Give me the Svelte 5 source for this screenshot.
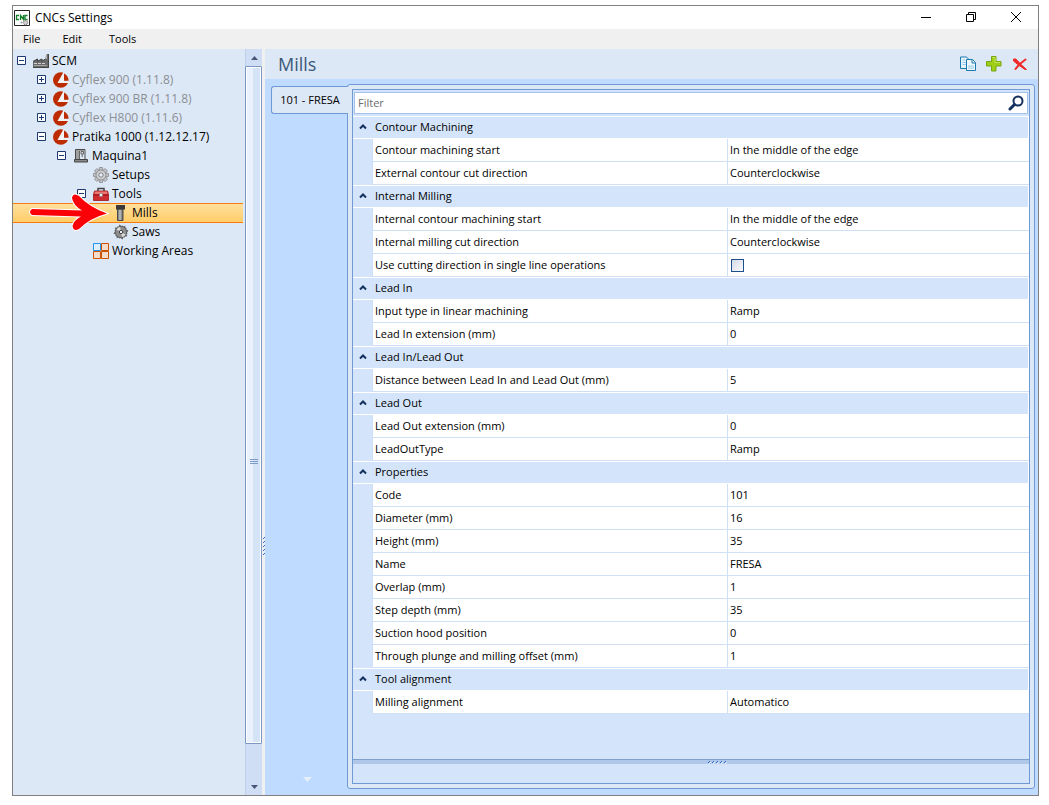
<script>
  const tree = [
    { label: 'SCM', icon: 'factory', depth: 0, open: true },
    { label: 'Cyflex 900 (1.11.8)', icon: 'brand', depth: 1, open: false, muted: true },
    { label: 'Cyflex 900 BR (1.11.8)', icon: 'brand', depth: 1, open: false, muted: true },
    { label: 'Cyflex H800 (1.11.6)', icon: 'brand', depth: 1, open: false, muted: true },
    { label: 'Pratika 1000 (1.12.12.17)', icon: 'brand', depth: 1, open: true },
    { label: 'Maquina1', icon: 'machine', depth: 2, open: true },
    { label: 'Setups', icon: 'gear', depth: 3 },
    { label: 'Tools', icon: 'toolbox', depth: 3, open: true },
    { label: 'Mills', icon: 'mill', depth: 4 },
    { label: 'Saws', icon: 'saw', depth: 4 },
    { label: 'Working Areas', icon: 'areas', depth: 3 }
  ];

  const groups = [
    { name: 'Contour Machining', props: [
      ['Contour machining start', 'In the middle of the edge'],
      ['External contour cut direction', 'Counterclockwise']
    ] },
    { name: 'Internal Milling', props: [
      ['Internal contour machining start', 'In the middle of the edge'],
      ['Internal milling cut direction', 'Counterclockwise'],
      ['Use cutting direction in single line operations', false]
    ] },
    { name: 'Lead In', props: [
      ['Input type in linear machining', 'Ramp'],
      ['Lead In extension (mm)', '0']
    ] },
    { name: 'Lead In/Lead Out', props: [
      ['Distance between Lead In and Lead Out (mm)', '5']
    ] },
    { name: 'Lead Out', props: [
      ['Lead Out extension (mm)', '0'],
      ['LeadOutType', 'Ramp']
    ] },
    { name: 'Properties', props: [
      ['Code', '101'],
      ['Diameter (mm)', '16'],
      ['Height (mm)', '35'],
      ['Name', 'FRESA'],
      ['Overlap (mm)', '1'],
      ['Step depth (mm)', '35'],
      ['Suction hood position', '0'],
      ['Through plunge and milling offset (mm)', '1']
    ] },
    { name: 'Tool alignment', props: [
      ['Milling alignment', 'Automatico']
    ] }
  ];

  let selected = $state('Mills');
  let filter = $state('');
  let closed = $state({});

  const teeth = [0, 45, 90, 135, 180, 225, 270, 315];

  function matches(name) {
    return name.toLowerCase().includes(filter.toLowerCase());
  }
</script>

{#snippet treeIcon(name)}
  <svg class="icon" width="16" height="16" viewBox="0 0 16 16" aria-hidden="true">
    {#if name === 'factory'}
      <path d="M0 8.5 4.5 6v2.200L9 6v2.200L12.500 6 13 1h2.500v14H0z" fill="#6a6a6a" />
      <path d="M0 8.500 4.500 6v2.200L9 6v2.200L12.500 6" stroke="#3c3c3c" fill="none" />
      <path d="M13.500 1v5" stroke="#b5b5b5" />
      <path d="M1 10.500h11" stroke="#d2d2d2" stroke-dasharray="3 1" />
      <path d="M1 12.500h13" stroke="#a6a6a6" />
      <path d="M0 14.500h16M15.500 1v14" stroke="#444" />
    {:else if name === 'brand'}
      <circle cx="7.800" cy="8" r="7.800" fill="#bd2c00" />
      <path d="M10.500 0 4.500 11H16V0z" fill="#f3f3f6" />
      <path d="M11 0h5v9.500h-5z" fill="#dde8f6" />
      <path d="M11 1.500C14 3 15.600 5.500 15.600 8.800H11z" fill="#bd2c00" />
    {:else if name === 'machine'}
      <path d="M2.500 12V1.500H12V11" fill="none" stroke="#4a4a4a" />
      <path d="M3 2h3v10H3z" fill="#a0a0a0" />
      <path d="M6.500 2v10" stroke="#666" />
      <path d="M6 2.500h5" stroke="#999" />
      <path d="M8 3.500h2.500v2.500H8zM9.200 6v3" fill="#ddd" stroke="#666" />
      <path d="M1.500 11.500h13v2.500H1.500z" fill="#888" stroke="#444" />
    {:else if name === 'gear'}
      <g fill="#c3c4c5" stroke="#85878a" stroke-width=".8">
        {#each teeth as t}
          <path d="M6.500.5h3l.4 3H6.100z" transform="rotate({t} 8 8)" />
        {/each}
        <circle cx="8" cy="8" r="5" />
      </g>
      <circle cx="8" cy="8" r="4.300" fill="#cfd0d1" />
      <circle cx="8" cy="8" r="2.200" fill="#e8effa" stroke="#777" stroke-width=".9" />
    {:else if name === 'toolbox'}
      <path d="M5 5V2.500h6V5" fill="none" stroke="#444" stroke-width="1.500" />
      <path d="M1.500 5h13l1 3.500V14.500H.5V8.500z" fill="#cf2d2f" stroke="#97171c" stroke-width=".8" />
      <path d="M2 5.500h12l.6 2.500H1.400z" fill="#ee7771" />
      <path d="M.5 9h15" stroke="#8e1218" />
      <path d="M6.500 7.500h3v3h-3z" fill="#eee" stroke="#777" stroke-width=".6" />
    {:else if name === 'mill'}
      <defs>
        <linearGradient id="steel"><stop stop-color="#666" /><stop offset=".45" stop-color="#c4c4c4" /><stop offset="1" stop-color="#5c5c5c" /></linearGradient>
      </defs>
      <path d="M4.500 4h5.500v11.500H4.500z" fill="url(#steel)" stroke="#4a4a4a" />
      <path d="M3 0h9v4.500H3z" fill="#3a3a3a" />
    {:else if name === 'saw'}
      <g fill="#5e5e5e">
        {#each teeth as t}
          <path d="M5 4 6.500.5l2 1.500L10 1.500 10 4z" transform="rotate({t} 8 8)" />
        {/each}
      </g>
      <circle cx="8" cy="8" r="5.300" fill="#8d8d8d" />
      <path d="M8 8 3.500 5.500A5 5 0 0 1 7 3zM8 8l4.500 2.500A5 5 0 0 1 9 13z" fill="#dcdcdc" />
      <circle cx="8" cy="8" r="1.700" fill="#eee" stroke="#444" />
    {:else}
      <path d="M8.500.5h7v7h-7zM.5 8.500h7v7h-7zM8.500 8.500h7v7h-7z" fill="#f3dccb" stroke="#cc5200" />
      <path d="M.5.5h7v7h-7z" fill="#dcedfb" stroke="#2196f3" />
    {/if}
  </svg>
{/snippet}

<div class="window">
  <header class="titlebar">
    <svg width="16" height="16" viewBox="0 0 16 16" aria-hidden="true">
      <path d="M.5.5h15v15H.5z" fill="#fff" stroke="#222" />
      <path d="M5 5.500H2.500v4H5M6.500 10V5.500L9.500 9.500V5M13.500 5.500H11v4h2.500" fill="none" stroke="#14802a" stroke-width="1.300" />
      <circle cx="11.500" cy="12.500" r="2" fill="#ddd" stroke="#888" stroke-dasharray="1 .6" stroke-width="1.500" />
      <circle cx="7.500" cy="12.500" r="1" fill="#999" />
    </svg>
    <h1>CNCs Settings</h1>
    <div class="caption-buttons">
      <button aria-label="Minimize">
        <svg width="12" height="12" viewBox="0 0 12 12"><path d="M1 6.500h10" stroke="#000" /></svg>
      </button>
      <button aria-label="Restore">
        <svg width="12" height="12" viewBox="0 0 12 12"><path d="M1.500 3.500h7v7h-7zM3.500 3.500v-2h7v7h-2" fill="none" stroke="#000" /></svg>
      </button>
      <button aria-label="Close">
        <svg width="12" height="12" viewBox="0 0 12 12"><path d="m1 1 10 10M11 1 1 11" stroke="#000" /></svg>
      </button>
    </div>
  </header>

  <nav class="menubar">
    <button>File</button>
    <button>Edit</button>
    <button>Tools</button>
  </nav>

  <div class="content">
    <ul class="tree">
      {#each tree as node}
        <li class:selected={node.label === selected} style="--depth: {node.depth}">
          {#if node.open !== undefined}
            <button class="expander" aria-label="Toggle {node.label}">
              <svg width="9" height="9" viewBox="0 0 9 9">
                <path d="M.5.5h8v8h-8z" fill="#fff" stroke="#1c3a6e" />
                <path d={node.open ? 'M2 4.500h5' : 'M2 4.500h5M4.500 2v5'} stroke="#1c3a6e" />
              </svg>
            </button>
          {:else}
            <span class="expander"></span>
          {/if}
          {@render treeIcon(node.icon)}
          <button class="node" class:muted={node.muted} onclick={() => selected = node.label}>{node.label}</button>
          {#if node.icon === 'mill'}
            <svg class="pointer" width="82" height="40" viewBox="0 0 82 40" aria-hidden="true">
              <path
                d="M5 17Q1 20 5 23L54 24.500Q47 28 45.500 34Q46.500 40 52 37Q63 26 80 21.500Q62 15 52 4Q46 0 45 6Q46 13 55 18.500Z"
                fill="#fb0007" stroke="#fff" stroke-width="2" paint-order="stroke"
              />
            </svg>
          {/if}
        </li>
      {/each}
    </ul>

    <div class="scrollbar">
      <button aria-label="Scroll up">
        <svg width="7" height="4" viewBox="0 0 7 4"><path d="M3.500 0 7 4H0z" fill="#4b5578" /></svg>
      </button>
      <div class="thumb">
        <svg width="8" height="5" viewBox="0 0 8 5"><path d="M0 .5h8M0 2.500h8M0 4.500h8" stroke="#7d9bc6" /></svg>
      </div>
      <div class="track"></div>
      <button aria-label="Scroll down">
        <svg width="7" height="4" viewBox="0 0 7 4"><path d="M0 0h7L3.500 4z" fill="#4b5578" /></svg>
      </button>
    </div>

    <div class="splitter">
      <svg width="3" height="19" viewBox="0 0 3 19">
        <path d="M1 3 3 1M1 7l2-2M1 11l2-2M1 15l2-2M1 19l2-2" stroke="#2f68cf" />
      </svg>
    </div>

    <main>
      <header class="page-header">
        <h2>Mills</h2>
        <button aria-label="Copy">
          <svg width="16" height="16" viewBox="0 0 16 16">
            <path d="M.5 1h6l2.500 2.500V12.500H.5z" fill="#e8f4fb" stroke="#1b79ae" />
            <path d="M2.500 4h3M2.500 6.500h4M2.500 8.500h4" stroke="#9ccbe6" />
            <path d="M6.500 3.500h6L15.500 6.500V14.500h-9z" fill="#eff8fd" stroke="#1b79ae" />
            <path d="M12 4v3h3" fill="none" stroke="#1b79ae" />
            <path d="M8 9h6v4H8z" fill="#c3e0f0" />
          </svg>
        </button>
        <button aria-label="Add">
          <svg width="16" height="16" viewBox="0 0 16 16">
            <path d="M5.500.5h4.500v5h5v4.500h-5v5H5.500v-5h-5V5.500h5z" fill="#9fce17" stroke="#76a610" />
            <path d="M6.500 1.500h2.500v5h5" fill="none" stroke="#c3e45a" />
          </svg>
        </button>
        <button aria-label="Delete">
          <svg width="16" height="16" viewBox="0 0 16 16">
            <path d="M1.500 3 4 3Q8 8 14.500 13.500L13 13.500Q6 9 1.500 5z" fill="#f02a2a" stroke="#f02a2a" stroke-linejoin="round" />
            <path d="M13.500 3.500Q7 8 3.500 13" fill="none" stroke="#f02a2a" stroke-width="2" stroke-linecap="round" />
          </svg>
        </button>
      </header>

      <div class="page">
        <div class="tabs">
          <button class="tab">101 - FRESA</button>
          <svg class="more" width="9" height="5" viewBox="0 0 9 5" aria-hidden="true"><path d="M0 0h9L4.500 5z" fill="#e6effb" /></svg>
        </div>

        <section class="panel">
          <div class="grid">
            <div class="search">
              <input type="text" placeholder="Filter" aria-label="Filter" bind:value={filter} />
              <svg width="16" height="16" viewBox="0 0 16 16" aria-hidden="true">
                <circle cx="10" cy="6" r="4.500" fill="none" stroke="#14305e" stroke-width="2" />
                <path d="M6.500 9.500 2 14" stroke="#14305e" stroke-width="3" stroke-linecap="round" />
              </svg>
            </div>

            <table>
              <colgroup>
                <col class="gutter-col" />
                <col />
                <col class="value-col" />
              </colgroup>
              <tbody>
                {#each groups as group}
                  <tr>
                    <th colspan="3">
                      <button onclick={() => closed[group.name] = !closed[group.name]}>
                        <svg width="8" height="6" viewBox="0 0 8 6" aria-hidden="true"><path d="M1 4.500 4 1.500l3 3" fill="none" stroke="#14305e" stroke-width="2" /></svg>
                        {group.name}
                      </button>
                    </th>
                  </tr>
                  {#if !closed[group.name]}
                    {#each group.props.filter((p) => matches(p[0])) as [name, value]}
                      <tr>
                        <td class="gutter"></td>
                        <td>{name}</td>
                        <td class="value">
                          {#if typeof value === 'boolean'}
                            <input type="checkbox" checked={value} aria-label={name} />
                          {:else}
                            {value}
                          {/if}
                        </td>
                      </tr>
                    {/each}
                  {/if}
                {/each}
              </tbody>
            </table>

            <div class="divider">
              <svg width="19" height="4" viewBox="0 0 19 4" aria-hidden="true">
                <path d="m0 3 2-2M4 3l2-2M8 3l2-2M12 3l2-2M16 3l2-2" stroke="#2f68cf" />
                <path d="m1 4 2-2M5 4l2-2M9 4l2-2M13 4l2-2M17 4l2-2" stroke="#fff" stroke-width=".7" />
              </svg>
            </div>
            <div class="description"></div>
          </div>
        </section>
      </div>
    </main>
  </div>
</div>

<style>
  :global(body) {
    background: #fff;
  }

  .window {
    box-sizing: border-box;
    display: flex;
    flex-direction: column;
    min-height: calc(100vh - 14px);
    margin: 5px 10px 9px 12px;
    border: 1px solid #808080;
    font: 12px/18px "Open Sans", "Noto Sans", sans-serif;
    color: #000;
  }

  button {
    padding: 0;
    border: 0;
    background: none;
    font: inherit;
    color: inherit;
  }

  svg {
    display: block;
    flex: none;
  }

  h1,
  h2 {
    margin: 0;
    font-weight: 400;
  }

  .titlebar {
    display: flex;
    align-items: center;
    height: 23px;
    padding-left: 1px;
    gap: 5px;
  }

  h1 {
    flex: 1;
    font-size: 12px;
  }

  .caption-buttons {
    display: flex;
    padding-bottom: 2px;
  }

  .caption-buttons button {
    display: flex;
    justify-content: center;
    width: 45px;
  }

  .menubar {
    display: flex;
    align-items: center;
    height: 20px;
    padding-left: 10px;
    gap: 22px;
    background: #f0f0f0;
    font-size: 11px;
  }

  .menubar button:last-child {
    margin-left: 5px;
  }

  .content {
    display: flex;
    flex: 1;
    background: #dde8f6;
  }

  .tree {
    flex: none;
    width: 230px;
    margin: 0 2px 0 0;
    padding: 2px 0 0;
    list-style: none;
  }

  .tree li {
    position: relative;
    box-sizing: border-box;
    display: flex;
    align-items: center;
    height: 19px;
    padding-left: calc(4px + 20px * var(--depth));
  }

  .tree li.selected {
    z-index: 1;
    background: linear-gradient(#ffe0a0, #ffcd69);
    box-shadow: inset 0 1px #f57c10, 0 1px #f57c10;
  }

  .expander {
    width: 9px;
    margin-right: 7px;
  }

  .node {
    margin-left: 3px;
    white-space: nowrap;
  }

  .node.muted {
    color: #8b8f94;
  }

  .pointer {
    position: absolute;
    left: 14px;
    top: -11px;
  }

  .scrollbar {
    box-sizing: border-box;
    display: flex;
    flex-direction: column;
    flex: none;
    width: 17px;
    border-left: 1px solid #bdcfe9;
    background: #cfdef4;
  }

  .scrollbar button {
    display: flex;
    align-items: center;
    justify-content: center;
    height: 17px;
  }

  .thumb {
    display: flex;
    flex: 20;
    align-items: center;
    justify-content: center;
    margin-left: -1px;
    border: 1px solid #7b98c4;
    border-radius: 1px;
    background: linear-gradient(90deg, #e9f1fc 45%, #d5e3f6 45%);
    box-shadow: inset 0 0 0 1px #fff;
  }

  .thumb svg {
    margin-top: 112px;
  }

  .track {
    flex: 1;
  }

  .splitter {
    display: flex;
    align-items: center;
    flex: none;
    width: 3px;
    background: #f0f0f0;
  }

  .splitter svg {
    margin-top: 246px;
  }

  main {
    display: flex;
    flex-direction: column;
    flex: 1;
    min-width: 0;
    background: #bfdbff;
  }

  .page-header {
    display: flex;
    align-items: center;
    height: 30px;
    padding: 0 10px 0 13px;
    gap: 10px;
    background: #dde8f6;
  }

  h2 {
    flex: 1;
    font-size: 18px;
    color: #3b5878;
  }

  .page {
    display: flex;
    flex: 1;
    padding: 5px 3px 6px 6px;
  }

  .tabs {
    display: flex;
    flex-direction: column;
    flex: none;
    width: 77px;
    margin-right: -1px;
    padding-top: 2px;
    z-index: 1;
  }

  .tab {
    height: 28px;
    border: 1px solid #6f9ad6;
    border-right: 0;
    border-radius: 3px 0 0 3px;
    background: #dde8f6;
    font-size: 11px;
    white-space: nowrap;
  }

  .more {
    margin: auto 0 7px 32px;
  }

  .panel {
    display: flex;
    flex: 1;
    min-width: 0;
    padding: 4px;
    border: 1px solid #6f9ad6;
    border-radius: 3px;
    background: #dde8f6;
  }

  .grid {
    display: flex;
    flex-direction: column;
    flex: 1;
    min-width: 0;
    border: 1px solid #6f9ad6;
    background: #d4e5fb;
    font-size: 11px;
  }

  .search {
    display: flex;
    align-items: center;
    height: 20px;
    margin: 2px 1px;
    padding-right: 3px;
    border: 1px solid #a3c1ea;
    background: #fff;
  }

  .search input {
    flex: 1;
    min-width: 0;
    padding: 0 3px;
    border: 0;
    outline: 0;
    background: none;
    font: inherit;
  }

  .search input::placeholder {
    color: #6d6d6d;
  }

  table {
    width: 100%;
    border-collapse: separate;
    border-spacing: 0;
    table-layout: fixed;
  }

  .gutter-col {
    width: 19px;
  }

  .value-col {
    width: 302px;
  }

  td,
  th {
    box-sizing: border-box;
    height: 23px;
    padding: 0 2px;
    border: 0 solid #cfdff5;
    border-width: 0 0 1px 1px;
    background: #fff;
    font-weight: 400;
    line-height: 18px;
    text-align: left;
    white-space: nowrap;
  }

  th {
    padding: 0 0 2px 6px;
    border: solid #fff;
    border-width: 1px 1px 1px 0;
    background: #d4e5fb;
  }

  th button {
    display: flex;
    align-items: center;
    gap: 8px;
  }

  .gutter {
    border: 0;
    background: #d4e5fb;
  }

  .value {
    overflow: hidden;
  }

  input[type='checkbox'] {
    display: block;
    appearance: none;
    box-sizing: border-box;
    width: 13px;
    height: 13px;
    margin: 0 1px;
    border: 1px solid #1c4f8c;
    background: linear-gradient(135deg, #d5dae6, #fafbfd);
  }

  .divider {
    display: flex;
    justify-content: center;
    align-items: center;
    height: 4px;
    margin-top: auto;
    border-top: 1px solid #7f9fcd;
    background: #afc8ea;
  }

  .divider svg {
    margin-left: 52px;
  }

  .description {
    height: 19px;
  }
</style>
